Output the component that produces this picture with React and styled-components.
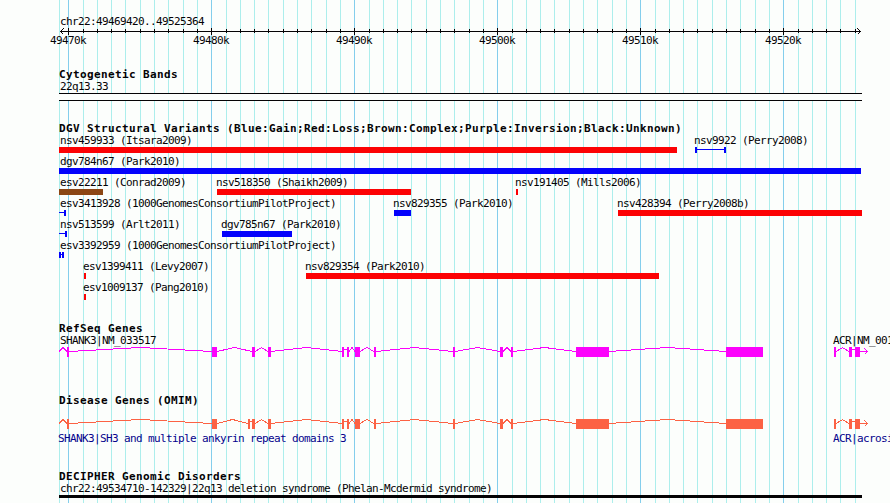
import styled, { createGlobalStyle } from "styled-components";

const GlobalStyle = createGlobalStyle`
  * {
    box-sizing: border-box;
  }
  body {
    margin: 0;
    background: #fcfefc;
    overflow: hidden;
  }
`;

const Browser = styled.main`
  position: relative;
  width: 890px;
  height: 503px;
  padding-top: 15px;
  overflow: hidden;
  color: #040204;
  font-family: "DejaVu Sans Mono", "Liberation Mono", monospace;
  font-size: 11px;
  line-height: 13px;
  letter-spacing: -0.622px;
  white-space: pre;
`;

const Gridlines = styled.svg`
  position: absolute;
  top: 0;
  left: 0;
`;

const Content = styled.div`
  position: relative;
  display: flex;
  flex-direction: column;
`;

const Drawing = styled.svg`
  display: block;
  flex: none;
  overflow: visible;
`;

const Ruler = styled.header`
  display: flex;
  flex-direction: column;
  height: 53px;
`;

const TickLabels = styled.div`
  display: flex;
  padding-left: 50px;
  span {
    flex: 0 0 143px;
  }
`;

const Track = styled.section`
  display: flex;
  flex-direction: column;
  flex: none;
  height: ${({ $height }) => $height}px;
`;

const Title = styled.h2`
  flex: none;
  height: ${({ $height }) => $height || 12}px;
  margin: 0;
  padding-left: 59px;
  font-size: 11px;
  font-weight: bold;
  letter-spacing: 0.378px;
`;

const Caption = styled.div`
  flex: none;
  height: 13px;
  padding-left: 60px;
`;

const Chromosome = styled.div`
  flex: none;
  width: 803px;
  height: 8px;
  margin-left: 59px;
  border: solid #040204;
  border-width: 1px 0;
  background: #fcfefc;
`;

const Lanes = styled.div`
  display: flex;
  flex-direction: column;
`;

const Lane = styled.div`
  display: grid;
  flex: none;
  height: ${({ $height }) => $height || 21}px;
  padding-top: ${({ $top }) => $top || 0}px;
`;

const Feature = styled.div`
  grid-area: 1 / 1;
  display: flex;
  flex-direction: column;
  width: max-content;
  margin-left: ${({ $x }) => $x}px;
`;

const FeatureName = styled.span`
  height: 13px;
  margin-left: ${({ $indent }) => $indent}px;
`;

const Bar = styled.div`
  width: ${({ $width }) => $width}px;
  height: 6px;
  background: ${({ $color }) => $color};
`;

const Span = styled.div`
  width: ${({ $width }) => $width}px;
  height: 6px;
  border: solid #0402fc;
  border-width: 0 2px 0 ${({ $open }) => ($open ? 0 : 2)}px;
  background: linear-gradient(#0402fc, #0402fc) 0 2px / 100% 1px no-repeat;
`;

const GeneName = styled.span`
  grid-area: 1 / 1;
  margin-left: ${({ $x }) => $x}px;
  color: ${({ $color }) => $color || "#040204"};
`;

const Disorder = styled.div`
  flex: none;
  width: 803px;
  height: 3px;
  margin-left: 59px;
  background: #040204;
`;

const RED = "#fc0204";
const BLUE = "#0402fc";
const BROWN = "#8c4614";
const NAVY = "#04028c";

const LEFT = 59;

// 1 kb positions, a major line every ten starting with 49470k
const ticks = [
  59, 68, 83, 97, 111, 125, 140, 154, 168, 183, 197, 211, 226, 240, 254, 268, 283, 297, 311, 326, 340, 354, 369, 383,
  397, 411, 426, 440, 454, 469, 483, 497, 512, 526, 540, 554, 569, 583, 597, 612, 626, 640, 655, 669, 683, 697, 712,
  726, 740, 755, 769, 783, 798, 812, 826, 840, 855,
];
const isMajor = (index) => index % 10 === 1;

const variants = [
  [
    { name: "nsv459933 (Itsara2009)", start: 59, end: 677, color: RED },
    { name: "nsv9922 (Perry2008)", start: 695, end: 726, span: true },
  ],
  [{ name: "dgv784n67 (Park2010)", start: 59, end: 861, color: BLUE }],
  [
    { name: "esv22211 (Conrad2009)", start: 59, end: 103, color: BROWN },
    { name: "nsv518350 (Shaikh2009)", start: 217, end: 411, color: RED },
    { name: "nsv191405 (Mills2006)", start: 516, end: 518, color: RED },
  ],
  [
    { name: "esv3413928 (1000GenomesConsortiumPilotProject)", start: 59, end: 66, span: true, open: true },
    { name: "nsv829355 (Park2010)", start: 394, end: 411, color: BLUE },
    { name: "nsv428394 (Perry2008b)", start: 618, end: 862, color: RED },
  ],
  [
    { name: "nsv513599 (Arlt2011)", start: 59, end: 67, span: true, open: true },
    { name: "dgv785n67 (Park2010)", start: 222, end: 292, color: BLUE },
  ],
  [{ name: "esv3392959 (1000GenomesConsortiumPilotProject)", start: 59, end: 64, span: true }],
  [
    { name: "esv1399411 (Levy2007)", start: 84, end: 86, color: RED },
    { name: "nsv829354 (Park2010)", start: 306, end: 659, color: RED },
  ],
  [{ name: "esv1009137 (Pang2010)", start: 84, end: 86, color: RED }],
];

// [x, width] of every exon
const shank3 = [
  [67, 2],
  [212, 5],
  [252, 3],
  [268, 3],
  [342, 2],
  [347, 2],
  [355, 5],
  [374, 2],
  [453, 2],
  [500, 3],
  [511, 2],
  [576, 33],
  [726, 37],
];
const shank3Omim = [...shank3.slice(0, 2), [248, 2], ...shank3.slice(2)];
const acr = [
  [834, 2],
  [849, 3],
  [855, 5],
];

function intronPoints(from, to) {
  if (to - from <= 3) {
    return `${from},2.5 ${to},2.5`;
  }
  return `${from},4.5 ${(from + to) / 2},0.5 ${to},4.5`;
}

function Exons({ exons, open }) {
  const introns = exons.slice(1).map(([x], i) => [exons[i][0] + exons[i][1], x]);
  if (open) {
    introns.unshift([LEFT, exons[0][0]]);
  }
  return (
    <>
      {introns.map(([from, to]) => (
        <polyline key={from} points={intronPoints(from, to)} fill="none" />
      ))}
      {exons.map(([x, width]) => (
        <rect key={x} x={x} y="0" width={width} height="10" stroke="none" />
      ))}
    </>
  );
}

function GeneModel({ exons, color }) {
  return (
    <Drawing width="890" height="10" fill={color} stroke={color} shapeRendering="crispEdges">
      <Exons exons={exons} open />
      <Exons exons={acr} />
      <path d="M860 4.5H868M864.5 1.5L867.5 4.5L864.5 7.5" fill="none" />
    </Drawing>
  );
}

function Axis() {
  return (
    <Drawing width="890" height="6" stroke="#040204" fill="none" shapeRendering="crispEdges">
      <path d="M60 3.5H861M63.5 0.5L60.5 3.5L63.5 6.5M857.5 0.5L860.5 3.5L857.5 6.5" />
      {ticks.slice(1).map((x, i) => (
        <path key={x} d={isMajor(i + 1) ? `M${x + 0.5} 0V7` : `M${x + 0.5} 1V5`} />
      ))}
    </Drawing>
  );
}

function Variant({ name, start, end, color, span, open }) {
  return (
    <Feature $x={start}>
      <FeatureName $indent={start === LEFT ? 1 : -1}>{name}</FeatureName>
      {span ? <Span $width={end - start} $open={open} /> : <Bar $width={end - start} $color={color} />}
    </Feature>
  );
}

function App() {
  return (
    <Browser>
      <GlobalStyle />
      <Gridlines width="890" height="503" shapeRendering="crispEdges">
        {ticks.map((x, i) => (
          <rect key={x} x={x} y="0" width="1" height="503" fill={isMajor(i) ? "#84ceec" : "#aceeec"} />
        ))}
      </Gridlines>
      <Content>
        <Ruler>
          <Caption>chr22:49469420..49525364</Caption>
          <Axis />
          <TickLabels>
            {["49470k", "49480k", "49490k", "49500k", "49510k", "49520k"].map((label) => (
              <span key={label}>{label}</span>
            ))}
          </TickLabels>
        </Ruler>
        <Track $height={54}>
          <Title>Cytogenetic Bands</Title>
          <Caption>22q13.33</Caption>
          <Chromosome />
        </Track>
        <Track $height={200}>
          <Title>DGV Structural Variants (Blue:Gain;Red:Loss;Brown:Complex;Purple:Inversion;Black:Unknown)</Title>
          <Lanes>
            {variants.map((lane) => (
              <Lane key={lane[0].name}>
                {lane.map((variant) => (
                  <Variant key={variant.name} {...variant} />
                ))}
              </Lane>
            ))}
          </Lanes>
        </Track>
        <Track $height={72}>
          <Title>RefSeq Genes</Title>
          <Lane $height={13}>
            <GeneName $x={60}>SHANK3|NM_033517</GeneName>
            <GeneName $x={833}>ACR|NM_001097</GeneName>
          </Lane>
          <GeneModel exons={shank3} color="#fc02fc" />
        </Track>
        <Track $height={76}>
          <Title $height={25}>Disease Genes (OMIM)</Title>
          <GeneModel exons={shank3Omim} color="#fc6244" />
          <Lane $height={19} $top={3}>
            <GeneName $x={58} $color={NAVY}>
              SHANK3|SH3 and multiple ankyrin repeat domains 3
            </GeneName>
            <GeneName $x={833} $color={NAVY}>
              ACR|acrosin
            </GeneName>
          </Lane>
        </Track>
        <Track $height={33}>
          <Title>DECIPHER Genomic Disorders</Title>
          <Caption>chr22:49534710-142329|22q13 deletion syndrome (Phelan-Mcdermid syndrome)</Caption>
          <Disorder />
        </Track>
      </Content>
    </Browser>
  );
}

export default App;
